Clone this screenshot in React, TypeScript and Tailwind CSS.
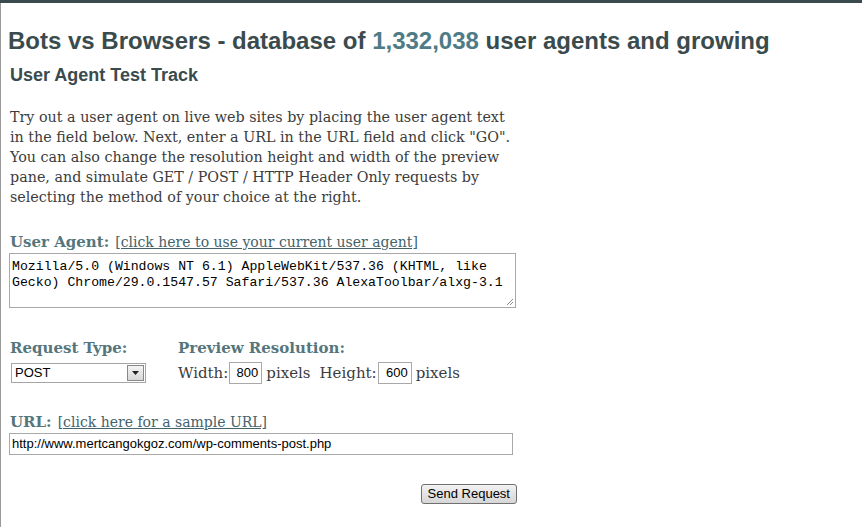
export default function App() {
  const serif = "font-['DejaVu_Serif',serif]";
  const label = `${serif} font-bold text-[#55767c] text-[15px]`;
  const link = `${serif} text-[#44636a] underline text-[14px]`;

  return (
    <div className="w-[862px] h-[527px] bg-white border-t-[3px] border-[#3a4b4e] overflow-hidden">
      <div className="h-full border-l border-[#999] pl-[7px]">
        <h1 className="font-['Liberation_Sans',sans-serif] font-bold text-[24px] text-[#3a4b4e] pt-[24px] leading-[28px]">
          Bots vs Browsers - database of <span className="text-[#4e7b85]">1,332,038</span> user agents and growing
        </h1>
        <h2 className="font-['Liberation_Sans',sans-serif] font-bold text-[18px] text-[#3a4b4e] pl-[2px] mt-[9px] leading-[22px]">
          User Agent Test Track
        </h2>

        <div className="pl-[2px] w-[520px]">
          <p className={`${serif} text-[14.3px] leading-[20px] text-[#3c3c3c] mt-[21px] whitespace-nowrap`}>
            Try out a user agent on live web sites by placing the user agent text
            <br />
            in the field below. Next, enter a URL in the URL field and click "GO".
            <br />
            You can also change the resolution height and width of the preview
            <br />
            pane, and simulate GET / POST / HTTP Header Only requests by
            <br />
            selecting the method of your choice at the right.
          </p>

          <div className="mt-[25px] flex gap-[6px] items-baseline leading-[20px]">
            <span className={label}>User Agent:</span>
            <span className={link}>[click here to use your current user agent]</span>
          </div>
          <div className="relative w-[507px] h-[55px] border border-[#a9a9a9] mt-[1px] -ml-[1px] px-[2px] pt-[5px]">
            <div className="font-['Liberation_Mono',monospace] text-[13.2px] leading-[16px] text-black">
              Mozilla/5.0 (Windows NT 6.1) AppleWebKit/537.36 (KHTML, like Gecko) Chrome/29.0.1547.57 Safari/537.36 AlexaToolbar/alxg-3.1
            </div>
            <svg className="absolute right-[1px] bottom-[1px]" width="8" height="8" viewBox="0 0 8 8">
              <path d="M7 1L1 7M7 4L4 7" stroke="#888" strokeWidth="1" />
            </svg>
          </div>

          <div className="flex mt-[30px]">
            <div className="w-[168px]">
              <div className={`${label} leading-[20px]`}>Request Type:</div>
              <div className="mt-[5px] ml-[1px] w-[135px] h-[20px] border border-[#a5a5a5] flex items-center justify-between">
                <span className="font-['Liberation_Sans',sans-serif] text-[13px] text-black pl-[3px]">POST</span>
                <div className="w-[17px] h-[16px] mr-[1px] border border-[#888] bg-gradient-to-b from-[#f4f4f4] to-[#d8d8d8] flex items-center justify-center">
                  <svg width="7" height="4" viewBox="0 0 7 4">
                    <path d="M0 0H7L3.5 4Z" fill="#222" />
                  </svg>
                </div>
              </div>
            </div>
            <div>
              <div className={`${label} leading-[20px]`}>Preview Resolution:</div>
              <div className={`flex items-center mt-[4px] ${serif} text-[15px] text-[#3c3c3c]`}>
                <span>Width:</span>
                <span className="ml-[1px] w-[33px] h-[22px] border border-[#a9a9a9] font-['Liberation_Sans',sans-serif] text-[13px] text-black text-right pr-[3px] leading-[20px]">800</span>
                <span className="ml-[4px]">pixels</span>
                <span className="ml-[9px]">Height:</span>
                <span className="ml-[1px] w-[34px] h-[22px] border border-[#a9a9a9] font-['Liberation_Sans',sans-serif] text-[13px] text-black text-right pr-[3px] leading-[20px]">600</span>
                <span className="ml-[4px]">pixels</span>
              </div>
            </div>
          </div>

          <div className="mt-[27px] flex gap-[6px] items-baseline leading-[20px]">
            <span className={label}>URL:</span>
            <span className={link}>[click here for a sample URL]</span>
          </div>
          <div className="w-[504px] h-[22px] border border-[#a9a9a9] mt-[1px] -ml-[1px] pl-[2px] flex items-center">
            <span className="font-['Liberation_Sans',sans-serif] text-[13px] text-black">http://www.mertcangokgoz.com/wp-comments-post.php</span>
          </div>

          <div className="w-[507px] flex justify-end mt-[29px]">
            <button className="h-[20px] px-[6px] border border-[#707070] rounded-[3px] bg-gradient-to-b from-[#f2f2f2] to-[#d6d6d6] font-['Liberation_Sans',sans-serif] text-[13px] text-black leading-[18px]">
              Send Request
            </button>
          </div>
        </div>
      </div>
    </div>
  );
}
